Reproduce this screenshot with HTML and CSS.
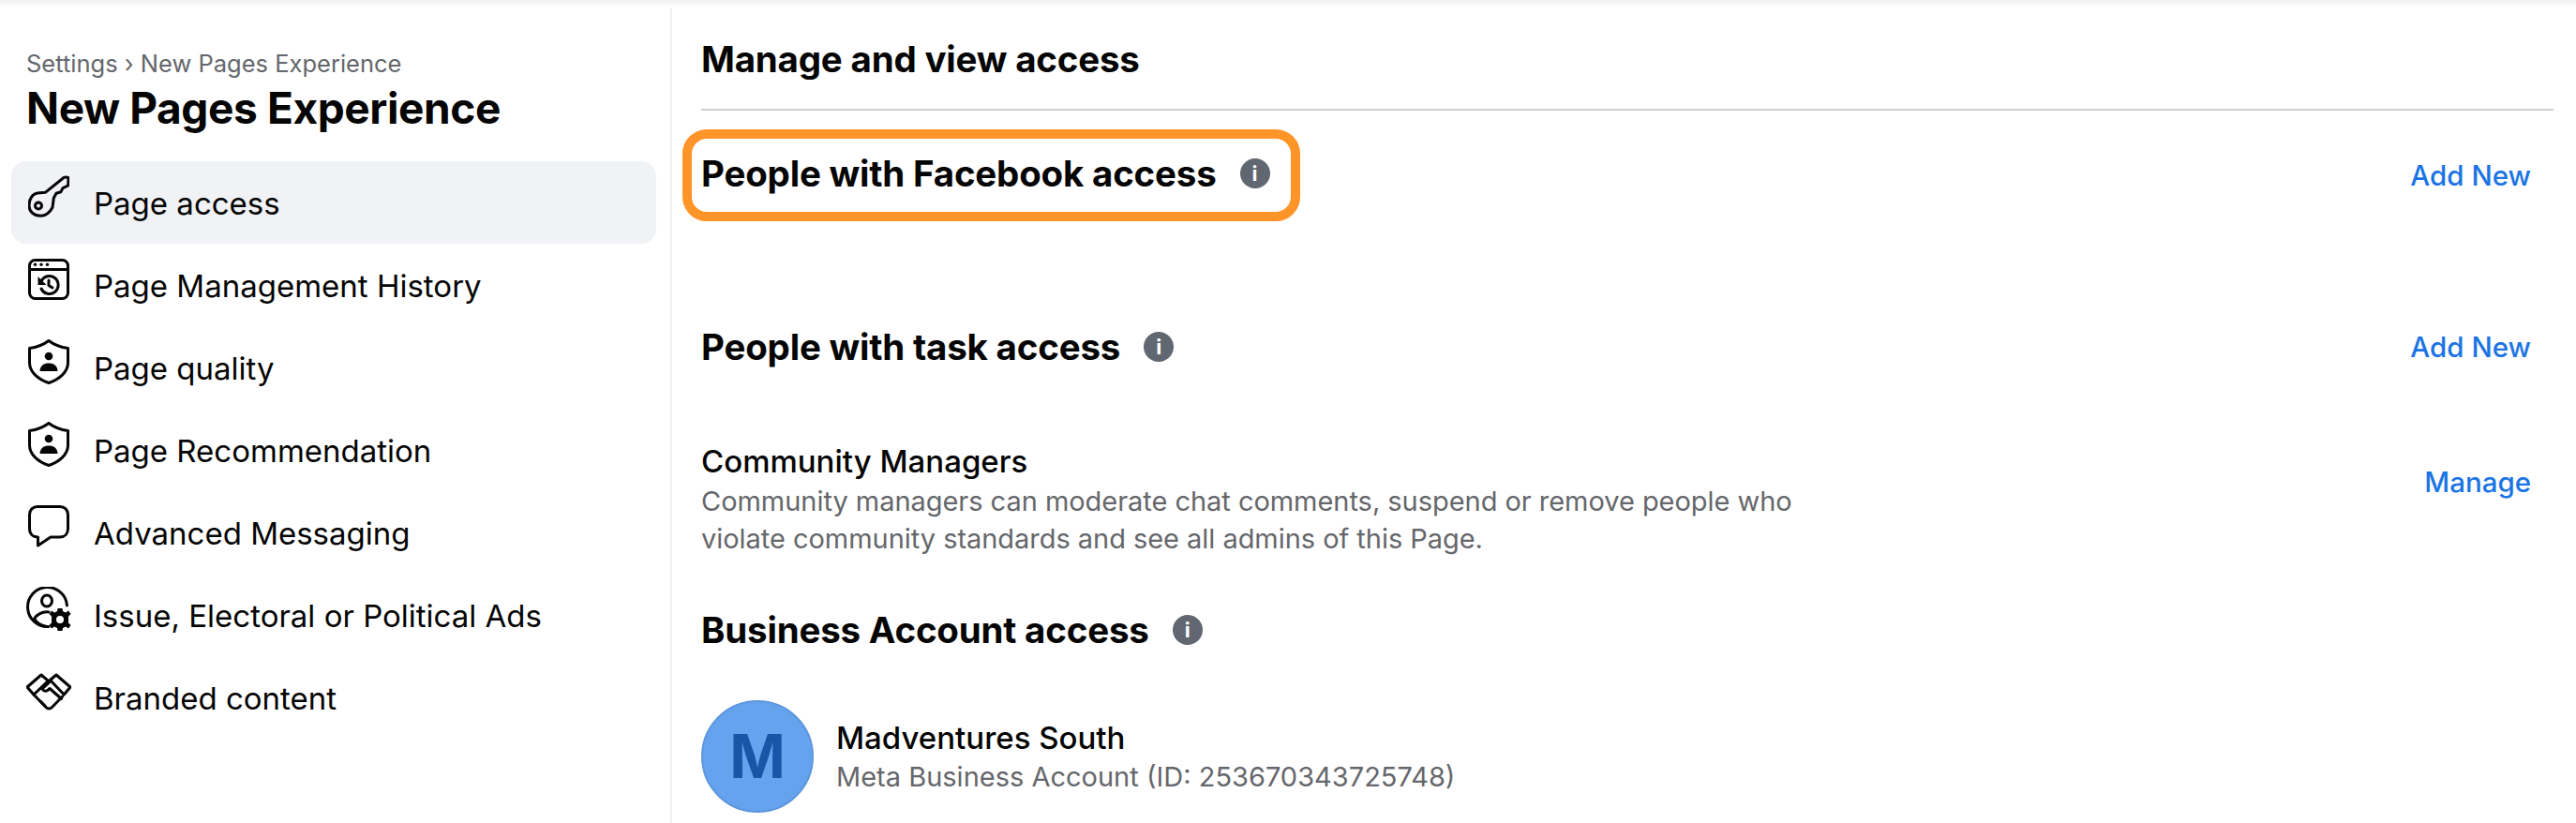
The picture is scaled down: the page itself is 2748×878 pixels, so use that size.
FILE: index.html
```html
<!DOCTYPE html>
<html lang="en">
<head>
    <meta charset="UTF-8">
    <meta name="viewport" content="width=device-width, initial-scale=1.0">
    <title>Page access</title>
    <link rel="stylesheet" href="styles.css">
</head>
<body>

    <div class="top-strip"></div>

    <div class="layout">
        <aside class="sidebar">
            <p class="crumbs">Settings › New Pages Experience</p>
            <h1>New Pages Experience</h1>

            <nav class="nav">
                <a class="nav-item active">
                    <svg class="nav-icon" viewBox="0 0 44 44">
                        <path d="M1 31.500C1 24 5 18.500 10 18C13 17.500 16 17.500 18.300 17.300L38 1.500C39.500 0.700 41.500 1 43 1.700L42.700 10L37 12.700L35 16.700L30 18.300L27.300 23.300L26 33.300C23 39 18 42.300 13.300 42.300C6 42.300 1 37.500 1 31.500Z"/>
                        <circle cx="11" cy="31.500" r="3.500"/>
                    </svg>
                    <span>Page access</span>
                </a>
                <a class="nav-item">
                    <svg class="nav-icon" viewBox="0 0 44 44">
                        <rect x="1.500" y="1.500" width="41" height="41" rx="6"/>
                        <path d="M1.500 11.500H42.500"/>
                        <circle class="solid" cx="7.500" cy="6.300" r="1.700"/>
                        <circle class="solid" cx="14" cy="6.300" r="1.700"/>
                        <circle class="solid" cx="20.500" cy="6.300" r="1.700"/>
                        <path d="M14 24A9.500 9.500 0 1 1 14 32M22 23V28.500L26 31"/>
                        <path class="solid" d="M10.500 19V28H19.500Z"/>
                    </svg>
                    <span>Page Management History</span>
                </a>
                <a class="nav-item">
                    <svg class="nav-icon" viewBox="0 0 44 48">
                        <path d="M22 1.500C28 6 35 8.500 42.500 9.500V25C42.500 35 33 43 22 46.500C11 43 1.500 35 1.500 25V9.500C9 8.500 16 6 22 1.500Z"/>
                        <circle class="solid" cx="22" cy="18" r="4.300"/>
                        <path class="solid" d="M12.500 34C12.500 28 17 25.500 22 25.500C27 25.500 31.500 28 31.500 34Z"/>
                    </svg>
                    <span>Page quality</span>
                </a>
                <a class="nav-item">
                    <svg class="nav-icon" viewBox="0 0 44 48">
                        <path d="M22 1.500C28 6 35 8.500 42.500 9.500V25C42.500 35 33 43 22 46.500C11 43 1.500 35 1.500 25V9.500C9 8.500 16 6 22 1.500Z"/>
                        <circle class="solid" cx="22" cy="18" r="4.300"/>
                        <path class="solid" d="M12.500 34C12.500 28 17 25.500 22 25.500C27 25.500 31.500 28 31.500 34Z"/>
                    </svg>
                    <span>Page Recommendation</span>
                </a>
                <a class="nav-item">
                    <svg class="nav-icon" viewBox="0 0 44 46">
                        <path d="M10 1.500H34C39 1.500 42.500 5 42.500 10V25C42.500 30.500 39 34 34 34H24L10.500 43V34C5 34 1.500 30.500 1.500 25V10C1.500 5 5 1.500 10 1.500Z"/>
                    </svg>
                    <span>Advanced Messaging</span>
                </a>
                <a class="nav-item">
                    <svg class="nav-icon wide" viewBox="0 0 48 48">
                        <path d="M24 42.500A21 21 0 1 1 43.500 20"/>
                        <ellipse cx="22" cy="15" rx="5.500" ry="6"/>
                        <path d="M24 27C17 26 11 30 8.500 34C11 38 15 41 20 42"/>
                        <circle class="hole" cx="36" cy="35" r="13"/>
                        <path class="solid" d="M33.500 23H38.500L39 26L42 27.500L45 25.500L47.500 29L45 31.500V38.500L47.500 41L45 44.500L42 42.500L39 44L38.500 47H33.500L33 44L30 42.500L27 44.500L24.500 41L27 38.500V31.500L24.500 29L27 25.500L30 27.500L33 26Z"/>
                        <circle class="hole" cx="36" cy="35" r="4"/>
                    </svg>
                    <span>Issue, Electoral or Political Ads</span>
                </a>
                <a class="nav-item">
                    <svg class="nav-icon wide" viewBox="0 0 48 38">
                        <path d="M1 14L16 1L23.500 7.300L8 22Z"/>
                        <path d="M47 14L32 1L25.500 6.500L40.300 22Z"/>
                        <path d="M8 22L21 35.500C23 37.500 25.500 37.500 27.500 35.500L38.700 24"/>
                        <path d="M24.500 9L17 16C19 19 22 19 25 15.500L37.500 26.500M15 29L20 34"/>
                    </svg>
                    <span>Branded content</span>
                </a>
            </nav>
        </aside>

        <main class="content">
            <h2 class="page-head">Manage and view access</h2>

            <div class="row highlight-row">
                <div class="highlight">
                    <h2>People with Facebook access</h2>
                    <i class="info">i</i>
                </div>
                <a class="action">Add New</a>
            </div>

            <div class="row task-row">
                <div class="head-group">
                    <h2>People with task access</h2>
                    <i class="info">i</i>
                </div>
                <a class="action">Add New</a>
            </div>

            <div class="row role-row">
                <div class="role">
                    <h3>Community Managers</h3>
                    <p>Community managers can moderate chat comments, suspend or remove people who violate community standards and see all admins of this Page.</p>
                </div>
                <a class="action">Manage</a>
            </div>

            <div class="head-group business-head">
                <h2>Business Account access</h2>
                <i class="info">i</i>
            </div>

            <div class="account">
                <div class="avatar">M</div>
                <div>
                    <h3>Madventures South</h3>
                    <p>Meta Business Account (ID: 253670343725748)</p>
                </div>
            </div>
        </main>
    </div>

</body>
</html>
```

FILE: styles.css
```css
* {
    box-sizing: border-box;
}
html, body {
    height: 100%;
}
body {
    font-family: Inter, "Liberation Sans", sans-serif;
    background-color: white;
    color: #050505;
    margin: 0;
    overflow: hidden;
    display: flex;
    flex-direction: column;
}
h1, h2, h3, p {
    margin: 0;
}
.top-strip {
    height: 8px;
    flex: none;
    background: linear-gradient(#f1f1f2, #fff);
}
.layout {
    display: flex;
    flex: 1;
    min-height: 0;
}

/* left column */
.sidebar {
    width: 717px;
    flex: none;
    padding: 44px 12px 0;
    border-right: 2px solid #f0f0f1;
}
.crumbs {
    font-size: 25.500px;
    line-height: 32px;
    color: #65676b;
    margin-left: 16px;
}
h1 {
    font-size: 46px;
    line-height: 56px;
    font-weight: 700;
    margin: 3px 0 0 16px;
    letter-spacing: -0.4px;
}
.nav {
    margin-top: 29px;
    width: 688px;
}
.nav-item {
    display: flex;
    align-items: center;
    height: 88px;
    padding-left: 18px;
    border-radius: 16px;
    font-size: 33px;
}
.nav-item.active {
    background-color: #f0f2f5;
}
.nav-item span {
    margin-left: 26px;
    position: relative;
    top: 1px;
}
.nav-icon {
    width: 44px;
    height: 48px;
    flex: none;
    position: relative;
    top: -6px;
    fill: none;
    stroke: #050505;
    stroke-width: 3;
    stroke-linejoin: round;
    stroke-linecap: round;
}
.nav-icon.wide {
    width: 48px;
    margin: 0 -2px;
}
.nav-icon .solid {
    fill: #050505;
    stroke: none;
}
.nav-icon .hole {
    fill: white;
    stroke: none;
}

/* right column */
.content {
    flex: 1;
    min-width: 0;
    padding: 0 24px 0 31px;
}
h2 {
    font-size: 38.500px;
    line-height: 44px;
    font-weight: 700;
    letter-spacing: -0.2px;
}
h3 {
    font-size: 33px;
    line-height: 44px;
    font-weight: 500;
}
.page-head {
    padding-top: 33px;
    height: 110px;
    border-bottom: 2px solid #ced0d4;
}
.row {
    display: flex;
    justify-content: space-between;
    align-items: center;
}
.action {
    font-size: 29.500px;
    line-height: 40px;
    font-weight: 500;
    color: #1b74e4;
    margin-right: 24px;
}
.highlight-row {
    margin-top: 20px;
}
.highlight {
    display: flex;
    align-items: center;
    height: 98px;
    width: 659px;
    margin-left: -20px;
    padding-left: 20px;
    padding-bottom: 4px;
    border: 10px solid #ff9429;
    border-radius: 26px;
}
.highlight h2 {
    margin-left: -10px;
}
.head-group {
    display: flex;
    align-items: center;
}
.info {
    width: 32px;
    height: 32px;
    margin-left: 25px;
    border-radius: 50%;
    background-color: #606770;
    color: white;
    font: 700 22px/32px Inter, sans-serif;
    text-align: center;
}
.task-row {
    margin-top: 112px;
}
.role-row {
    margin-top: 78px;
    align-items: flex-start;
}
.role {
    width: 1185px;
}
.role p {
    font-size: 29px;
    line-height: 40px;
    color: #65676b;
    margin-top: 1px;
    letter-spacing: -0.04px;
}
.role-row .action {
    margin-top: 24px;
}
.business-head {
    margin-top: 55px;
}
.account {
    display: flex;
    align-items: center;
    gap: 24px;
    margin-top: 53px;
}
.avatar {
    width: 120px;
    height: 120px;
    border-radius: 50%;
    background-color: #66a3ee;
    border: 2px solid #5d96dc;
    color: #1a56a8;
    font-size: 64px;
    font-weight: 700;
    line-height: 116px;
    text-align: center;
}
.account p {
    font-size: 29px;
    line-height: 40px;
    color: #65676b;
}
```
